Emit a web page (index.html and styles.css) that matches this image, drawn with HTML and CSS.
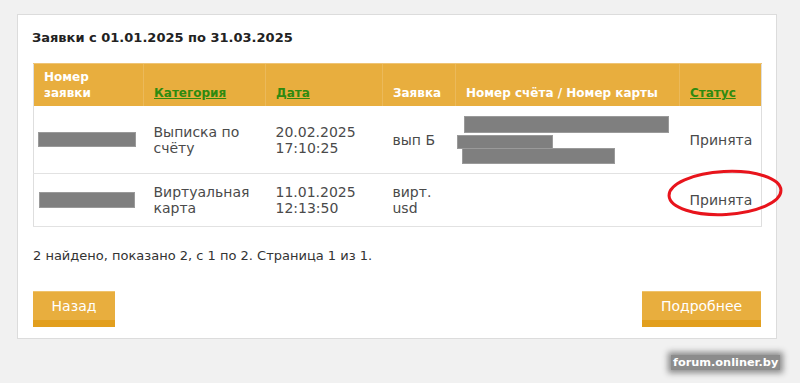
FILE: index.html
```html
<!DOCTYPE html>
<html lang="ru">
<head>
<meta charset="utf-8">
<title>Заявки</title>
<link rel="stylesheet" href="styles.css">
</head>
<body>
<div class="page">
  <div class="card">
    <h2 class="title">Заявки с 01.01.2025 по 31.03.2025</h2>
    <table class="grid">
      <colgroup>
        <col class="c1"><col class="c2"><col class="c3"><col class="c4"><col class="c5"><col class="c6">
      </colgroup>
      <thead>
        <tr>
          <th>Номер<br>заявки</th>
          <th><a href="#">Категория</a></th>
          <th><a href="#">Дата</a></th>
          <th>Заявка</th>
          <th>Номер счёта / Номер карты</th>
          <th><a href="#">Статус</a></th>
        </tr>
      </thead>
      <tbody>
        <tr class="r1">
          <td class="idcell"><span class="redact r-id1"></span></td>
          <td>Выписка по<br>счёту</td>
          <td>20.02.2025<br>17:10:25</td>
          <td>вып Б</td>
          <td class="acc"><span class="redact r-a1"></span><span class="redact r-a2"></span><span class="redact r-a3"></span></td>
          <td>Принята</td>
        </tr>
        <tr class="r2">
          <td class="idcell"><span class="redact r-id2"></span></td>
          <td>Виртуальная<br>карта</td>
          <td>11.01.2025<br>12:13:50</td>
          <td>вирт.<br>usd</td>
          <td></td>
          <td>Принята</td>
        </tr>
      </tbody>
    </table>
    <p class="summary">2 найдено, показано 2, с 1 по 2. Страница 1 из 1.</p>
    <div class="actions">
      <a class="btn btn-back" href="#">Назад</a>
      <a class="btn btn-more" href="#">Подробнее</a>
    </div>
  </div>
  <svg class="mark" width="124" height="54" viewBox="0 0 124 54">
    <ellipse cx="62" cy="27" rx="56" ry="21.5" transform="rotate(-3 62 27)" fill="none" stroke="#e8141c" stroke-width="3"/>
  </svg>
  <div class="watermark">forum.onliner.by</div>
</div>
</body>
</html>
```
FILE: styles.css
```css
html, body {
  margin: 0;
  padding: 0;
  background: #f1f1f1;
}
body {
  font-family: "DejaVu Sans", Verdana, sans-serif;
  color: #444;
}
.page {
  position: relative;
  width: 800px;
  height: 383px;
  overflow: hidden;
  padding-top: 14px;
  box-sizing: border-box;
}
.card {
  margin-left: 17px;
  width: 760px;
  box-sizing: border-box;
  background: #fff;
  border: 1px solid #dcdcdc;
  padding: 15px 14px 11px 14px;
}
.title {
  margin: 0 0 17px 0;
  font-size: 13px;
  line-height: 16px;
  font-weight: bold;
  color: #222;
}
.grid {
  border-collapse: collapse;
  width: 728px;
  margin-left: 1px;
  table-layout: fixed;
  border: 1px solid #dedede;
}
.c1 { width: 110px; }
.c2 { width: 122px; }
.c3 { width: 117px; }
.c4 { width: 73px; }
.c5 { width: 224px; }
.c6 { width: 82px; }
.grid th {
  background: #e8ae3e;
  color: #fff;
  font-size: 12px;
  line-height: 16px;
  font-weight: bold;
  text-align: left;
  vertical-align: bottom;
  white-space: nowrap;
  padding: 5px 10px 5px 10px;
  height: 31px;
  border-left: 1px solid #ebb95a;
  border-top: 1px solid #efc475;
}
.grid th:first-child { border-left: none; }
.grid th a {
  color: #2e8a10;
  text-decoration: underline;
}
.grid td {
  font-size: 14px;
  line-height: 16px;
  color: #4a4a4a;
  vertical-align: middle;
  padding: 0 10px;
  border-bottom: 1px solid #e2e2e2;
}
.grid .r1 td { height: 67px; }
.grid .r2 td { height: 52px; }
.grid td.idcell { padding: 0 0 0 5px; }
.redact {
  display: block;
  background: #7f7f7f;
  box-shadow: 0 0 0 1px #9a9a9a;
}
.r-id1 { width: 96px; height: 13px; }
.r-id2 { width: 94px; height: 14px; margin-left: 1px; }
.grid td.acc { padding: 0; }
.r-a1 { width: 203px; height: 15px; margin-left: 9px; }
.r-a2 { width: 94px; height: 12px; margin-left: 2px; margin-top: 4px; }
.r-a3 { width: 151px; height: 14px; margin-left: 7px; margin-top: 1px; }
.summary {
  margin: 21px 0 0 1px;
  font-size: 13px;
  line-height: 16px;
  color: #333;
}
.actions {
  display: flex;
  justify-content: space-between;
  margin: 27px 0 0 1px;
  width: 728px;
}
.btn {
  display: block;
  box-sizing: border-box;
  height: 36px;
  background: #e8ae3e;
  border-top: 1px solid #efc36c;
  border-bottom: 7px solid #e29f1e;
  color: #fff;
  text-decoration: none;
  font-size: 14px;
  line-height: 29px;
  text-align: center;
}
.btn-back { width: 82px; }
.btn-more { width: 119px; }
.mark {
  position: absolute;
  left: 663px;
  top: 166px;
}
.watermark {
  position: absolute;
  left: 671px;
  top: 355px;
  padding: 0 2px;
  font-family: "DejaVu Sans", Verdana, sans-serif;
  font-size: 11.3px;
  line-height: 15px;
  font-weight: bold;
  color: #fff;
  background: #8c8c8c;
  box-shadow: 0 0 6px 3px #8c8c8c;
}
```
